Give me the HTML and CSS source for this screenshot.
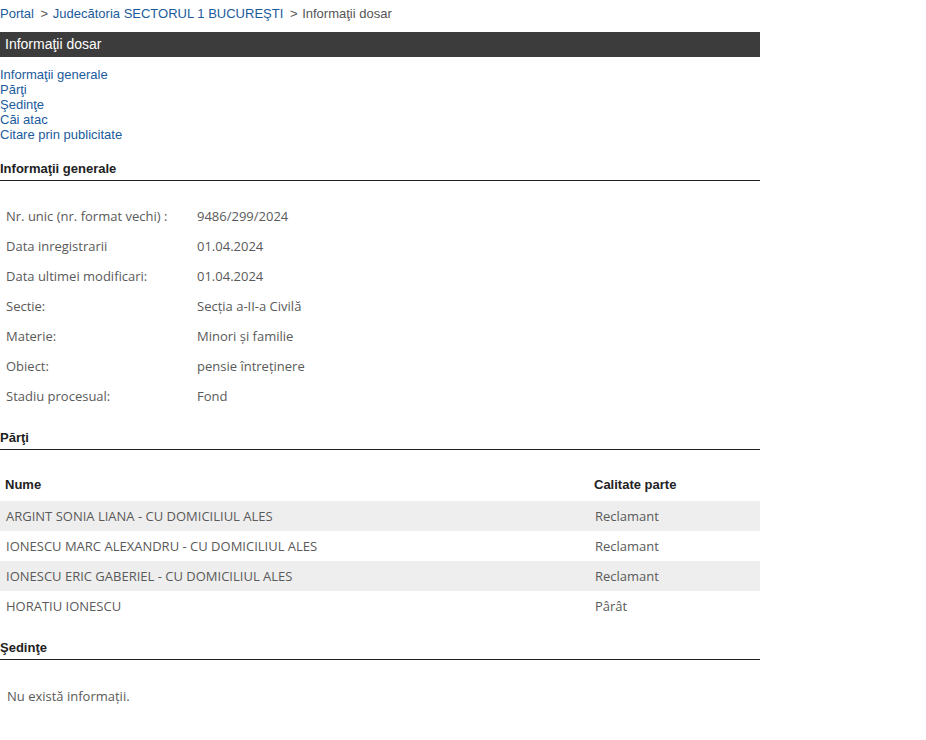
FILE: index.html
```html
<!DOCTYPE html>
<html lang="ro">
<head>
  <meta charset="UTF-8" />
  <meta name="viewport" content="width=device-width, initial-scale=1.0"/>
  <title>Informaţii dosar</title>
  <link rel="stylesheet" href="styles.css">
</head>
<body>
  <div class="page">
    <div class="breadcrumb">
      <a href="#">Portal</a>
      <span class="sep">&gt;</span>
      <a href="#">Judecătoria SECTORUL 1 BUCUREŞTI</a>
      <span class="sep">&gt;</span>
      <span class="current">Informaţii dosar</span>
    </div>

    <div class="title-bar">Informaţii dosar</div>

    <ul class="nav">
      <li><a href="#generale">Informaţii generale</a></li>
      <li><a href="#parti">Părţi</a></li>
      <li><a href="#sedinte">Şedinţe</a></li>
      <li><a href="#cai">Căi atac</a></li>
      <li><a href="#citare">Citare prin publicitate</a></li>
    </ul>

    <h2 class="section" id="generale">Informaţii generale</h2>
    <table class="info">
      <tr><td class="label">Nr. unic (nr. format vechi) :</td><td>9486/299/2024</td></tr>
      <tr><td class="label">Data inregistrarii</td><td>01.04.2024</td></tr>
      <tr><td class="label">Data ultimei modificari:</td><td>01.04.2024</td></tr>
      <tr><td class="label">Sectie:</td><td>Secția a-II-a Civilă</td></tr>
      <tr><td class="label">Materie:</td><td>Minori și familie</td></tr>
      <tr><td class="label">Obiect:</td><td>pensie întreținere</td></tr>
      <tr><td class="label">Stadiu procesual:</td><td>Fond</td></tr>
    </table>

    <h2 class="section" id="parti">Părţi</h2>
    <table class="parties">
      <thead>
        <tr><th class="name">Nume</th><th>Calitate parte</th></tr>
      </thead>
      <tbody>
        <tr><td class="name">ARGINT SONIA LIANA - CU DOMICILIUL ALES</td><td>Reclamant</td></tr>
        <tr><td class="name">IONESCU MARC ALEXANDRU - CU DOMICILIUL ALES</td><td>Reclamant</td></tr>
        <tr><td class="name">IONESCU ERIC GABERIEL - CU DOMICILIUL ALES</td><td>Reclamant</td></tr>
        <tr><td class="name">HORATIU IONESCU</td><td>Pârât</td></tr>
      </tbody>
    </table>

    <h2 class="section" id="sedinte">Şedinţe</h2>
    <p class="empty">Nu există informații.</p>
  </div>
</body>
</html>
```

FILE: styles.css
```css
body {
  margin: 0;
  background: #fff;
  font-family: "Liberation Sans", Arial, sans-serif;
  font-size: 13px;
  color: #333;
}

a {
  color: #1b5b9c;
  text-decoration: none;
}

.page {
  width: 760px;
}

.breadcrumb {
  padding: 6px 0;
  line-height: 16px;
  margin-bottom: 4px;
  color: #555;
}

.breadcrumb .sep {
  margin: 0 1px 0 3px;
  color: #555;
}

.title-bar {
  background: #3c3c3c;
  color: #fff;
  height: 25px;
  line-height: 25px;
  padding-left: 5px;
  font-size: 14px;
}

.nav {
  list-style: none;
  margin: 10px 0 0;
  padding: 0;
  line-height: 15px;
}

.section {
  margin: 18px 0 0;
  padding: 1px 0 4px;
  border-bottom: 1px solid #222;
  font-size: 13px;
  line-height: 15px;
  font-weight: bold;
  color: #222;
}

table {
  border-collapse: collapse;
  width: 100%;
}

td {
  font-family: "Open Sans", "DejaVu Sans", sans-serif;
  font-size: 13px;
  color: #5a5a5a;
  height: 30px;
  padding: 0 6px;
  vertical-align: middle;
}

.info {
  margin-top: 20px;
}

.info .label {
  width: 179px;
}

.parties {
  margin-top: 21px;
}

.parties th {
  text-align: left;
  font-size: 13px;
  font-weight: bold;
  color: #222;
  line-height: 15px;
  padding: 6px 5px 9px;
}

.parties .name {
  width: 577px;
}

.parties tbody tr:nth-child(odd) {
  background: #eee;
}

.empty {
  margin: 20px 0 0;
  padding: 1px 0 0 7px;
  line-height: 30px;
  font-family: "Open Sans", "DejaVu Sans", sans-serif;
  font-size: 13px;
  color: #5a5a5a;
}
```
